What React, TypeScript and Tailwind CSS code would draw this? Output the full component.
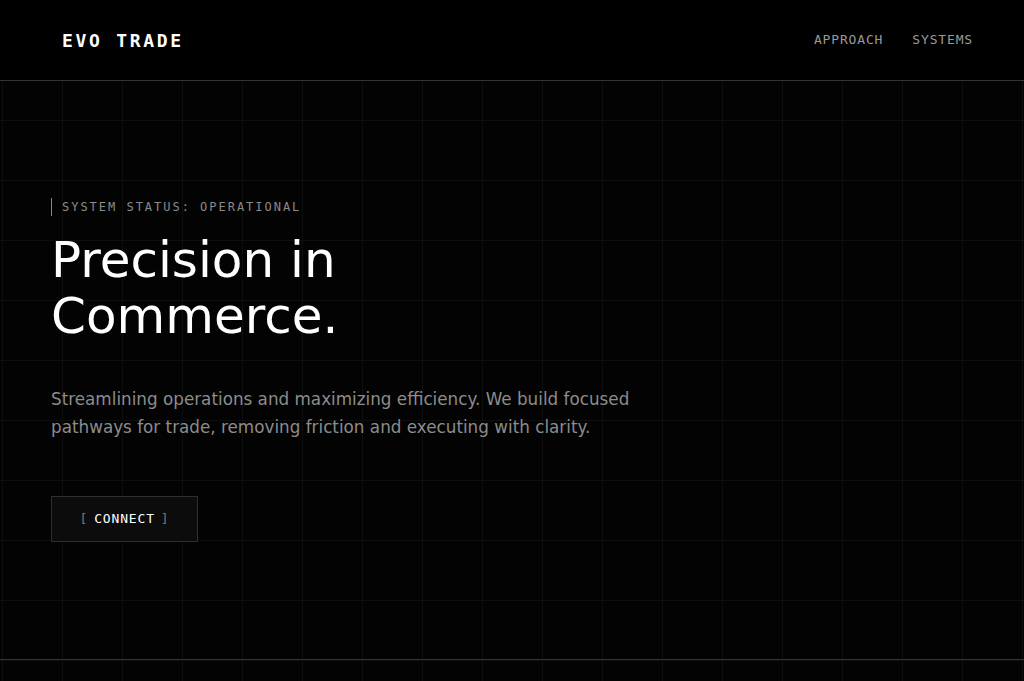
import React from "react";

const mono = "font-['DejaVu_Sans_Mono',monospace]";

export default function App() {
  return (
    <div className="min-h-screen bg-black text-white font-['DejaVu_Sans',sans-serif]">
      {/* Header */}
      <header className="h-[81px] border-b border-[#333] bg-black flex items-center justify-between pl-[62px] pr-[51px]">
        <div className={`${mono} text-[18px] font-bold tracking-[0.15em] text-white`}>EVO TRADE</div>
        <nav className={`${mono} flex items-center gap-[29px] text-[13px] tracking-[0.065em] text-[#999]`}>
          <a href="#approach">APPROACH</a>
          <a href="#systems">SYSTEMS</a>
        </nav>
      </header>

      <div className="bg-[#030303] bg-[linear-gradient(to_right,#0e0e0e_1px,transparent_1px),linear-gradient(to_bottom,#0e0e0e_1px,transparent_1px)] [background-size:60px_60px] [background-position:2px_39px]">
        {/* Hero */}
        <main className="h-[578px] flex items-center px-[51px]">
          <div className="w-full">
            <div className={`${mono} border-l border-[#888] pl-[10px] h-[18px] flex items-center text-[12px] tracking-[0.165em] text-[#8a8a8a]`}>
              SYSTEM STATUS: OPERATIONAL
            </div>
            <h1 className="mt-4 max-w-[500px] text-[50px] leading-[56px] font-normal text-white">
              Precision in Commerce.
            </h1>
            <p className="mt-[42px] max-w-[600px] text-[16.8px] leading-[1.65] text-[#8c8c8c]">
              Streamlining operations and maximizing efficiency. We build focused pathways for trade, removing friction and executing with clarity.
            </p>
            <button
              type="button"
              className={`${mono} mt-[54px] h-[46px] w-[147px] border border-[#2e2e2e] bg-[#0c0c0c] text-[13px] tracking-[0.065em] text-white flex items-center justify-center`}
            >
              <span className="text-[#777]">[</span>
              <span className="mx-[6px]">CONNECT</span>
              <span className="text-[#777]">]</span>
            </button>
          </div>
        </main>

        {/* Footer */}
        <footer className="border-t border-[#333] h-[80px]" />
      </div>
    </div>
  );
}
